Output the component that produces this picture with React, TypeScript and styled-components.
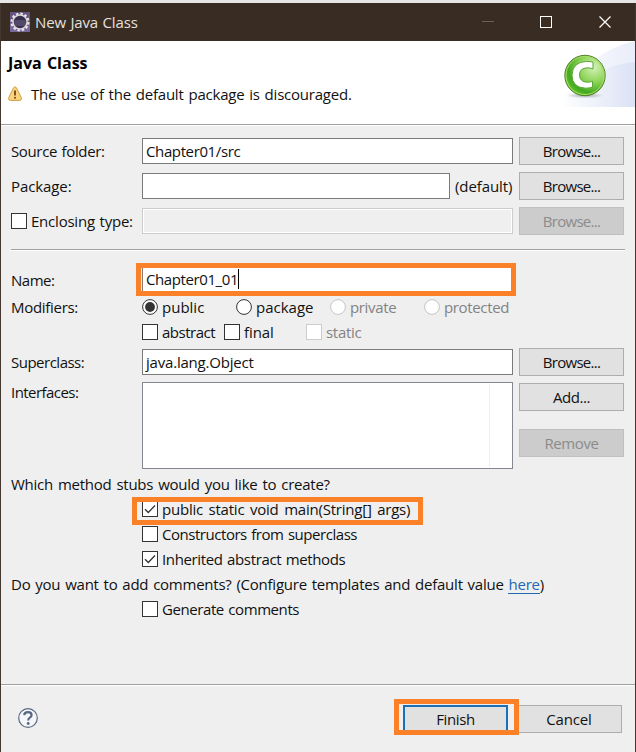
import React from "react";
import styled, { createGlobalStyle, css } from "styled-components";

const GlobalStyle = createGlobalStyle`
  * { box-sizing: border-box; }
  body {
    margin: 0;
    overflow: hidden;
    background: #efefef;
    font-family: "Open Sans", "Noto Sans", sans-serif;
    font-size: 15px;
    color: #111;
  }
`;

const Dialog = styled.div`
  width: 636px;
  height: 752px;
  display: flex;
  flex-direction: column;
  background: #efefef;
  border-top: 3px solid #e6e6e6;
`;

const Frame = styled.div`
  flex: 1;
  display: flex;
  flex-direction: column;
  border-left: 1px solid #43372f;
  border-right: 1px solid #43372f;
`;

const TitleBar = styled.header`
  height: 38px;
  display: flex;
  align-items: center;
  background: #392c23;
  color: #e4e1df;
  padding-left: 9px;
`;

const WindowTitle = styled.div`
  flex: 1;
  padding-left: 5px;
`;

const WindowControls = styled.svg`
  width: 176px;
  height: 38px;
`;

const Banner = styled.section`
  height: 83px;
  display: flex;
  justify-content: space-between;
  background: #fff;
`;

const BannerText = styled.div`
  padding: 10px 0 0 7px;
`;

const BannerTitle = styled.h1`
  margin: 0;
  font-size: 16px;
  line-height: 24px;
  font-weight: 700;
  color: #000;
`;

const BannerMessage = styled.div`
  display: flex;
  align-items: center;
  height: 24px;
  margin-top: 7px;
  gap: 9px;
`;

const Separator = styled.div<{ $inset?: boolean }>`
  height: 2px;
  flex: none;
  background: linear-gradient(#a0a0a0 50%, #fff 50%);
  ${(p) => p.$inset && css`margin: 14px 0 0; width: 614px;`}
`;

const Body = styled.main`
  flex: 1;
  display: flex;
  flex-direction: column;
  padding: 11px 10px 0;
`;

const Row = styled.div<{ $gap?: number; $height?: number; $top?: boolean }>`
  display: flex;
  flex: none;
  align-items: ${(p) => (p.$top ? "flex-start" : "center")};
  height: ${(p) => p.$height ?? 28}px;
  margin-top: ${(p) => p.$gap ?? 0}px;
`;

const Text = styled.span<{ $ls?: number; $ws?: number }>`
  white-space: pre;
  line-height: 20px;
  letter-spacing: ${(p) => p.$ls ?? 0}px;
  word-spacing: ${(p) => p.$ws ?? 0}px;
`;

const LabelCell = styled.div`
  width: 131px;
  flex: none;
  display: flex;
  align-items: center;
  gap: 4px;
`;

const Field = styled.div<{ $width?: number; $disabled?: boolean }>`
  width: ${(p) => p.$width ?? 371}px;
  height: 26px;
  display: flex;
  align-items: center;
  padding-left: 3px;
  border: 1px solid #7a7a7a;
  background: #fff;
  ${(p) =>
    p.$disabled &&
    css`
      border-color: #ccc;
      background: #efefef;
      box-shadow: inset 0 0 0 1px #fff;
    `}
`;

const Suffix = styled.div`
  width: 63px;
  padding-left: 5px;
`;

const Button = styled.button<{ $width?: number; $primary?: boolean }>`
  width: ${(p) => p.$width ?? 105}px;
  height: 28px;
  flex: none;
  padding: 0;
  font: inherit;
  color: #111;
  background: #e1e1e1;
  border: 1px solid #adadad;
  ${(p) => p.$primary && css`border: 2px solid #1b6fb5;`}
  &:disabled {
    color: #8b8b8b;
    background: #ccc;
    border-color: #bfbfbf;
  }
`;

const FieldButton = styled(Button)`
  margin-left: 6px;
`;

const HighlightedField = styled.div`
  width: 380px;
  height: 33px;
  margin-left: -6px;
  display: flex;
  align-items: center;
  border: 5px solid #fb8129;
  background: #fff;
  box-shadow: inset 1px 0 #efefef, inset 2px 0 #8a7a70;
  padding: 0 0 2px 5px;
`;

const Caret = styled.span`
  width: 1px;
  height: 20px;
  background: #000;
`;

const Option = styled.label<{ $width?: number; $dim?: boolean }>`
  display: flex;
  align-items: center;
  gap: 4px;
  ${(p) => p.$width && css`width: ${p.$width}px;`}
  ${(p) => p.$dim && css`color: #838383;`}
`;

const HighlightedOption = styled.div`
  width: 291px;
  height: 28px;
  margin-left: 121px;
  padding-left: 5px;
  display: flex;
  align-items: flex-start;
  border: 5px solid #fb8129;
  overflow: hidden;

  ${Option} {
    height: 20px;
    margin-top: -3px;
  }
`;

const Mark = styled.svg`
  width: 16px;
  height: 16px;
  flex: none;
`;

const ListBox = styled.div`
  width: 371px;
  height: 87px;
  display: flex;
  justify-content: flex-end;
  padding: 1px 0;
  border: 1px solid #828790;
  background: #fff;
`;

const ListColumn = styled.div`
  width: 23px;
  border-left: 1px solid #edf0f2;
`;

const ButtonStack = styled.div`
  display: flex;
  flex-direction: column;
  gap: 18px;
  padding-top: 1px;
`;

const Link = styled.a`
  color: #2468b4;
  border-bottom: 1px solid #2468b4;
  display: inline-block;
  line-height: 17px;
`;

const Footer = styled.footer`
  height: 66px;
  display: flex;
  align-items: flex-start;
  padding: 13px 13px 0 17px;
`;

const HelpIcon = styled.svg`
  width: 20px;
  height: 20px;
  margin-top: 9px;
`;

const FinishHighlight = styled.div`
  width: 125px;
  height: 36px;
  margin-left: 356px;
  padding: 1px 0 0 4px;
  border: 5px solid #fb8129;
  overflow: hidden;
  z-index: 1;
`;

const CancelSlot = styled.div`
  margin: 6px 0 0 -3px;
`;

function Check({ on, dim }: { on?: boolean; dim?: boolean }) {
  return (
    <Mark viewBox="0 0 16 16">
      <rect x=".5" y=".5" width="15" height="15" fill="#fff" stroke={dim ? "#ccc" : "#333"} />
      {on && <path d="M3 8.2 6.3 11.5 13 4.5" fill="none" stroke="#333" strokeWidth="1.3" />}
    </Mark>
  );
}

function Radio({ on, dim }: { on?: boolean; dim?: boolean }) {
  return (
    <Mark viewBox="0 0 16 16">
      <circle cx="8" cy="8" r="7.4" fill="#fff" stroke={dim ? "#c4c4c4" : "#333"} />
      {on && <circle cx="8" cy="8" r="4.9" fill="#333" />}
    </Mark>
  );
}

function EclipseIcon() {
  return (
    <svg width="20" height="20" viewBox="0 0 20 20">
      <rect width="20" height="20" fill="#655482" />
      <rect y="11" width="20" height="9" fill="#78699a" />
      <circle cx="10" cy="10" r="8.4" fill="none" stroke="#e9e6e8" strokeWidth="2.2" strokeDasharray="2.5 1.9" />
      <circle cx="10" cy="10" r="7" fill="#392f4c" stroke="#d9d5d9" strokeWidth="1.5" />
      <path d="M4.5 9h11M4 11h12M5 13h10" stroke="#6d6385" />
    </svg>
  );
}

function WarningIcon() {
  return (
    <svg width="14" height="16" viewBox="0 0 14 16">
      <path d="M5.7 1.6Q7 0 8.3 1.6L13.2 11.4Q14 14.2 11.8 14.4H2.2Q0 14.2.8 11.4Z" fill="#fbd47e" stroke="#d39b46" />
      <path d="M7 4.5v5" stroke="#744211" strokeWidth="1.8" />
      <circle cx="7" cy="11.7" r="1" fill="#744211" />
    </svg>
  );
}

function ClassArt() {
  return (
    <svg width="75" height="66" viewBox="0 0 75 66">
      <defs>
        <linearGradient id="sky" x1="0" x2="1">
          <stop offset="0" stopColor="#fff" />
          <stop offset="1" stopColor="#dbe2f5" />
        </linearGradient>
        <linearGradient id="haze" x1="0" x2="1">
          <stop offset="0" stopColor="#fff" />
          <stop offset="1" stopColor="#e9edfa" />
        </linearGradient>
        <radialGradient id="ball" cx=".72" cy=".3" r=".8">
          <stop offset="0" stopColor="#d4f2b8" />
          <stop offset=".45" stopColor="#8fd458" />
          <stop offset=".8" stopColor="#43a821" />
          <stop offset="1" stopColor="#65c62d" />
        </radialGradient>
        <radialGradient id="shade">
          <stop offset="0" stopColor="#777" stopOpacity=".6" />
          <stop offset="1" stopColor="#777" stopOpacity="0" />
        </radialGradient>
      </defs>
      <path d="M0 66Q22 12 75 0V66Z" fill="url(#haze)" />
      <path d="M0 66Q35 23 75 21V66Z" fill="url(#sky)" />
      <ellipse cx="25" cy="54.5" rx="19" ry="3" fill="url(#shade)" />
      <circle cx="25" cy="34.5" r="20.2" fill="url(#ball)" stroke="#55802d" />
      <circle cx="25" cy="34.5" r="19" fill="none" stroke="#a7df66" strokeWidth="1" />
      <path
        d="M33 21.200V28Q30.500 26.800 27.500 26.800Q19.500 27 19.500 34Q19.700 41.200 27.500 41.200Q30.500 41.200 32.500 40.200V46Q29.500 47.200 25.500 47.200Q12 46.500 12 34Q12.500 21 26.500 20.400Q30.500 20.400 33 21.200Z"
        fill="#fff"
        stroke="#57a836"
      />
    </svg>
  );
}

export default function App() {
  return (
    <Dialog>
      <GlobalStyle />
      <Frame>
        <TitleBar>
          <EclipseIcon />
          <WindowTitle><Text $ls={-0.15} $ws={0.8}>New Java Class</Text></WindowTitle>
          <WindowControls viewBox="0 0 176 38" fill="none" stroke="#fff">
            <path d="M23 18.5h12" stroke="#6b6058" />
            <rect x="81.5" y="13.5" width="11" height="11" />
            <path d="m140.500 13.500 11 11m0-11-11 11" strokeWidth="1.2" />
          </WindowControls>
        </TitleBar>
        <Banner>
          <BannerText>
            <BannerTitle><Text $ws={1}>Java Class</Text></BannerTitle>
            <BannerMessage>
              <WarningIcon />
              <Text $ls={-0.22} $ws={1.2}>The use of the default package is discouraged.</Text>
            </BannerMessage>
          </BannerText>
          <ClassArt />
        </Banner>
        <Separator />
        <Body>
          <Row>
            <LabelCell><Text $ls={-0.36} $ws={1}>Source folder:</Text></LabelCell>
            <Field><Text $ls={-0.38}>Chapter01/src</Text></Field>
            <FieldButton><Text $ls={-0.7}>Browse...</Text></FieldButton>
          </Row>
          <Row $gap={7}>
            <LabelCell><Text $ls={-0.1}>Package:</Text></LabelCell>
            <Field $width={308} />
            <Suffix><Text $ls={-0.1}>(default)</Text></Suffix>
            <FieldButton><Text $ls={-0.7}>Browse...</Text></FieldButton>
          </Row>
          <Row $gap={7}>
            <LabelCell><Check /><Text $ls={-0.22} $ws={1}>Enclosing type:</Text></LabelCell>
            <Field $disabled />
            <FieldButton disabled><Text $ls={-0.7}>Browse...</Text></FieldButton>
          </Row>
          <Separator $inset />
          <Row $gap={12} $height={33}>
            <LabelCell><Text $ls={-0.5}>Name:</Text></LabelCell>
            <HighlightedField><Text $ls={-0.4}>Chapter01_01</Text><Caret /></HighlightedField>
          </Row>
          <Row $gap={1} $height={20}>
            <LabelCell><Text $ls={-0.3}>Modifiers:</Text></LabelCell>
            <Option $width={94}><Radio on /><Text>public</Text></Option>
            <Option $width={94}><Radio /><Text>package</Text></Option>
            <Option $width={94} $dim><Radio dim /><Text $ls={-0.35}>private</Text></Option>
            <Option $dim><Radio dim /><Text $ls={-0.35}>protected</Text></Option>
          </Row>
          <Row $gap={5} $height={20}>
            <LabelCell />
            <Option $width={82}><Check /><Text $ls={-0.5}>abstract</Text></Option>
            <Option $width={82}><Check /><Text $ls={-0.1}>final</Text></Option>
            <Option $dim><Check dim /><Text $ls={-0.3}>static</Text></Option>
          </Row>
          <Row $gap={6}>
            <LabelCell><Text $ls={-0.5}>Superclass:</Text></LabelCell>
            <Field><Text $ls={-0.2}>java.lang.Object</Text></Field>
            <FieldButton><Text $ls={-0.7}>Browse...</Text></FieldButton>
          </Row>
          <Row $gap={6} $height={87} $top>
            <LabelCell><Text $ls={-0.55}>Interfaces:</Text></LabelCell>
            <ListBox><ListColumn /></ListBox>
            <ButtonStack>
              <FieldButton><Text $ls={-0.45}>Add...</Text></FieldButton>
              <FieldButton disabled><Text $ls={-0.4}>Remove</Text></FieldButton>
            </ButtonStack>
          </Row>
          <Row $gap={5} $height={20}>
            <Text $ls={-0.25} $ws={1.3}>Which method stubs would you like to create?</Text>
          </Row>
          <Row $gap={3}>
            <HighlightedOption>
              <Option><Check on /><Text $ls={-0.22} $ws={1.9}>public static void main(String[] args)</Text></Option>
            </HighlightedOption>
          </Row>
          <Row $height={18}>
            <LabelCell />
            <Option><Check /><Text $ls={-0.46} $ws={1}>Constructors from superclass</Text></Option>
          </Row>
          <Row $gap={7} $height={18}>
            <LabelCell />
            <Option><Check on /><Text $ls={-0.36} $ws={0.9}>Inherited abstract methods</Text></Option>
          </Row>
          <Row $gap={6} $height={20}>
            <Text $ls={-0.24} $ws={1.2}>
              Do you want to add comments? (Configure templates and default value <Link>here</Link>)
            </Text>
          </Row>
          <Row $gap={6} $height={18}>
            <LabelCell />
            <Option><Check /><Text $ls={-0.42} $ws={1}>Generate comments</Text></Option>
          </Row>
        </Body>
        <Separator />
        <Footer>
          <HelpIcon viewBox="0 0 20 20">
            <circle cx="10" cy="10" r="9.3" fill="#f4f6f9" stroke="#5d6b85" strokeWidth="1.2" />
            <path d="M6.200 7.200Q6.500 4.200 10 4.200Q13.600 4.200 13.600 7Q13.600 8.600 11.800 9.600Q10.200 10.600 10.200 12.600" fill="none" stroke="#566683" strokeWidth="2.200" />
            <circle cx="10.200" cy="15.500" r="1.400" fill="#566683" />
          </HelpIcon>
          <FinishHighlight><Button $primary><Text $ls={-0.4}>Finish</Text></Button></FinishHighlight>
          <CancelSlot><Button $width={106}><Text $ls={-0.15}>Cancel</Text></Button></CancelSlot>
        </Footer>
      </Frame>
    </Dialog>
  );
}
